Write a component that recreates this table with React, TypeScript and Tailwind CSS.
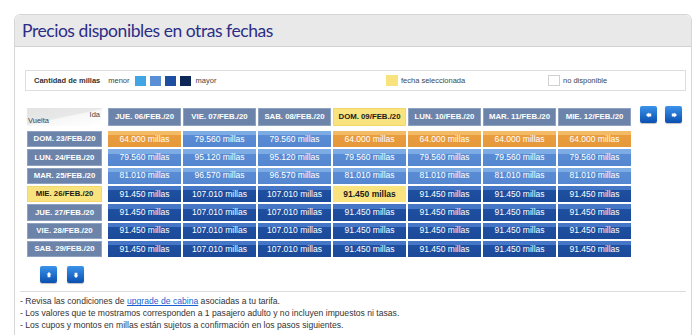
import React from "react";

// ─── Data ─────────────────────────────────────────────────────────────────────

type Tone = "o" | "l" | "d" | "y";

const idaDates = [
  "JUE. 06/FEB./20",
  "VIE. 07/FEB./20",
  "SAB. 08/FEB./20",
  "DOM. 09/FEB./20",
  "LUN. 10/FEB./20",
  "MAR. 11/FEB./20",
  "MIE. 12/FEB./20",
];

const selectedCol = 3;
const selectedRow = 3;

const rows: { date: string; cells: [string, Tone][] }[] = [
  {
    date: "DOM. 23/FEB./20",
    cells: [
      ["64.000", "o"], ["79.560", "l"], ["79.560", "l"], ["64.000", "o"],
      ["64.000", "o"], ["64.000", "o"], ["64.000", "o"],
    ],
  },
  {
    date: "LUN. 24/FEB./20",
    cells: [
      ["79.560", "l"], ["95.120", "l"], ["95.120", "l"], ["79.560", "l"],
      ["79.560", "l"], ["79.560", "l"], ["79.560", "l"],
    ],
  },
  {
    date: "MAR. 25/FEB./20",
    cells: [
      ["81.010", "l"], ["96.570", "l"], ["96.570", "l"], ["81.010", "l"],
      ["81.010", "l"], ["81.010", "l"], ["81.010", "l"],
    ],
  },
  {
    date: "MIE. 26/FEB./20",
    cells: [
      ["91.450", "d"], ["107.010", "d"], ["107.010", "d"], ["91.450", "y"],
      ["91.450", "d"], ["91.450", "d"], ["91.450", "d"],
    ],
  },
  ...["JUE. 27/FEB./20", "VIE. 28/FEB./20", "SAB. 29/FEB./20"].map((date) => ({
    date,
    cells: [
      ["91.450", "d"], ["107.010", "d"], ["107.010", "d"], ["91.450", "d"],
      ["91.450", "d"], ["91.450", "d"], ["91.450", "d"],
    ] as [string, Tone][],
  })),
];

const toneClass: Record<Tone, string> = {
  o: "bg-[linear-gradient(#f4bb66_0,#f4bb66_28%,#e99d3e_28%,#e5983a_100%)] text-white",
  l: "bg-[linear-gradient(#7dabe4_0,#7dabe4_28%,#598cd4_28%,#5487cf_100%)] text-white",
  d: "bg-[linear-gradient(#4577c6_0,#4577c6_28%,#1f4fa0_28%,#1b4a99_100%)] text-white",
  y: "bg-[#f9e37e] text-[#1a1a1a] font-bold",
};

// ─── Small pieces ─────────────────────────────────────────────────────────────

function ArrowButton({ dir }: { dir: "left" | "right" | "up" | "down" }) {
  const rot = { left: 0, right: 180, up: 90, down: 270 }[dir];
  return (
    <button
      type="button"
      className="flex h-[17px] w-[17px] items-center justify-center rounded-[2px] bg-[linear-gradient(#3b93ea,#0a4fb0)] shadow-[0_1px_1px_rgba(0,0,0,0.25)]"
    >
      <svg width="6" height="6" viewBox="0 0 6 6" style={{ transform: `rotate(${rot}deg)` }}>
        <polygon points="0,3 2.6,0.6 2.6,1.6 5.2,1.6 5.2,4.4 2.6,4.4 2.6,5.4" fill="white" />
      </svg>
    </button>
  );
}

// ─── App ──────────────────────────────────────────────────────────────────────

export default function App() {
  return (
    <div className="h-[335px] w-[700px] overflow-hidden bg-white pl-[14px] pr-[8px] pt-[14px] font-['Liberation_Sans',Arial,sans-serif]">
      <div className="h-[340px] rounded-t-[6px] border border-[#d6d6d6] bg-white">
        {/* Header */}
        <div className="flex h-[32px] items-center rounded-t-[6px] border-b border-[#d2d2d2] bg-[#e9e9e9] pl-[7px]">
          <h1 className="font-['Lato',sans-serif] text-[17.5px] leading-none tracking-[-0.45px] text-[#2c2d86]">
            Precios disponibles en otras fechas
          </h1>
        </div>

        <div className="px-[5px]">
          {/* Legend */}
          <div className="ml-[5px] mt-[23px] flex h-[21px] items-center border border-[#dedede] pl-[8px] text-[7.5px] text-[#444]">
            <div className="flex w-[352px] items-center">
              <span className="font-bold text-[#333]">Cantidad de millas</span>
              <span className="ml-[8px]">menor</span>
              <span className="ml-[5px] h-[10px] w-[11px] bg-[#42a5e3]" />
              <span className="ml-[4px] h-[10px] w-[11px] bg-[#5b8fd5]" />
              <span className="ml-[4px] h-[10px] w-[11px] bg-[#1d4ea0]" />
              <span className="ml-[4px] h-[10px] w-[11px] bg-[#0d2856]" />
              <span className="ml-[5px]">mayor</span>
            </div>
            <div className="flex w-[162px] items-center">
              <span className="h-[11px] w-[12px] bg-[#f9e37e]" />
              <span className="ml-[3px]">fecha seleccionada</span>
            </div>
            <div className="flex items-center">
              <span className="h-[11px] w-[12px] border border-[#d0d0d0] bg-white" />
              <span className="ml-[3px]">no disponible</span>
            </div>
          </div>

          {/* Table + nav */}
          <div className="ml-[7px] mt-[17px] flex items-start">
            <div className="grid grid-cols-[79px_repeat(7,73px)] grid-rows-[21px_repeat(7,16.33px)] gap-x-[2px] gap-y-[2px]">
              {/* Corner */}
              <div className="relative h-[18px] w-[75px] bg-[linear-gradient(168deg,#e3e3e3_0,#e8e8e8_48%,#f7f7f7_52%,#ffffff_100%)] text-[7.5px] text-[#444]">
                <span className="absolute right-[2px] top-[1px]">Ida</span>
                <span className="absolute bottom-[0px] left-[1px]">Vuelta</span>
              </div>
              {idaDates.map((d, i) => (
                <div
                  key={d}
                  className={
                    "flex h-[18px] items-center justify-center border text-[7.8px] font-bold " +
                    (i === selectedCol
                      ? "border-[#f1d868] bg-[#f9e37e] text-[#1a1a1a]"
                      : "border-[#8fa2c1] bg-[#6c84aa] text-white")
                  }
                >
                  {d}
                </div>
              ))}

              {rows.map((r, ri) => (
                <React.Fragment key={r.date}>
                  <div
                    className={
                      "flex w-[75px] items-center justify-center border text-[7.8px] font-bold " +
                      (ri === selectedRow
                        ? "border-[#f1d868] bg-[#f9e37e] text-[#1a1a1a]"
                        : "border-[#8fa2c1] bg-[#6c84aa] text-white")
                    }
                  >
                    {r.date}
                  </div>
                  {r.cells.map(([v, t], ci) => (
                    <div
                      key={ci}
                      className={"flex items-center justify-center text-[8.5px] " + toneClass[t]}
                    >
                      {v} millas
                    </div>
                  ))}
                </React.Fragment>
              ))}
            </div>

            <div className="ml-[9px] mt-[-2px] flex gap-[8px]">
              <ArrowButton dir="left" />
              <ArrowButton dir="right" />
            </div>
          </div>

          {/* Bottom nav */}
          <div className="ml-[20px] mt-[9px] flex gap-[10px]">
            <ArrowButton dir="up" />
            <ArrowButton dir="down" />
          </div>

          {/* Notes */}
          <div className="mt-[8px] border-t border-[#dcdcdc] pt-[3px] text-[8.6px] leading-[12px] text-[#333]">
            <p>
              - Revisa las condiciones de{" "}
              <a href="#" className="text-[#1a5fd0] underline">
                upgrade de cabina
              </a>{" "}
              asociadas a tu tarifa.
            </p>
            <p>- Los valores que te mostramos corresponden a 1 pasajero adulto y no incluyen impuestos ni tasas.</p>
            <p>- Los cupos y montos en millas están sujetos a confirmación en los pasos siguientes.</p>
          </div>
        </div>
      </div>
    </div>
  );
}
